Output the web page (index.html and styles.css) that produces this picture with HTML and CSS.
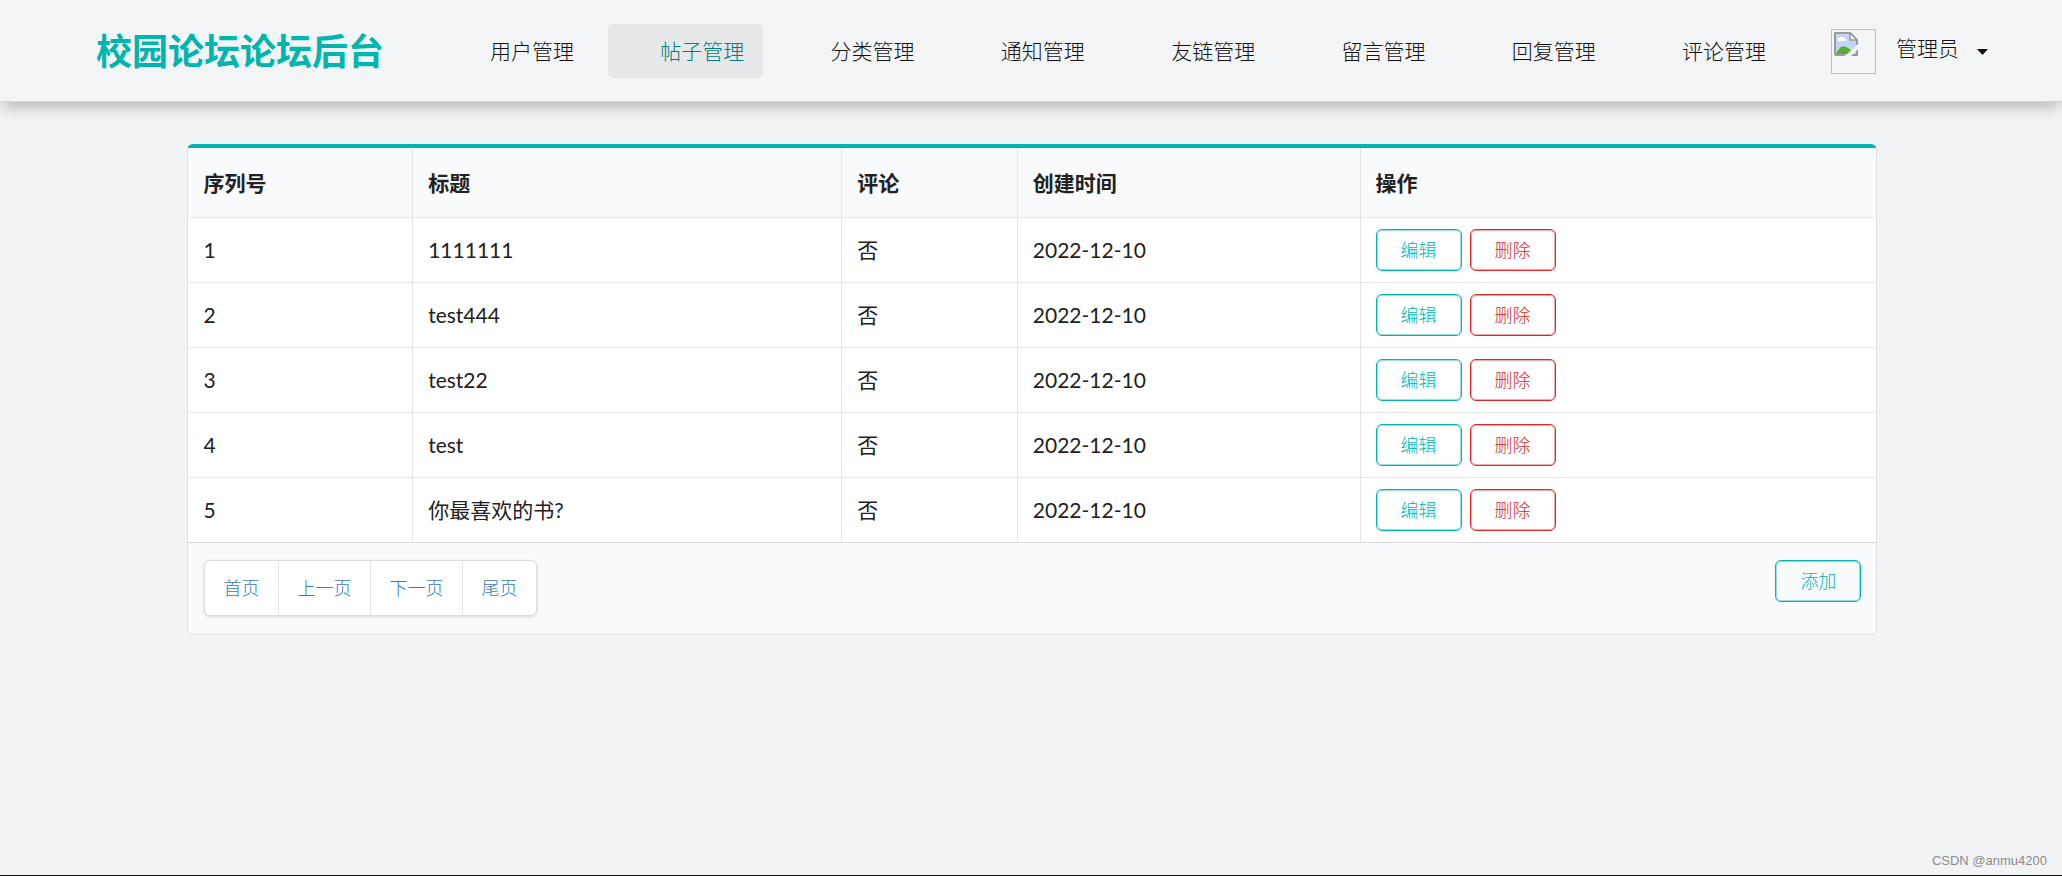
FILE: index.html
```html
<!DOCTYPE html>
<html lang="zh-CN">
<head>
<meta charset="utf-8">
<title>校园论坛论坛后台</title>
<link rel="stylesheet" href="styles.css">
</head>
<body>
<header class="topbar">
  <h1 class="brand">校园论坛论坛后台</h1>
  <nav class="menu">
    <a class="item" href="#">用户管理</a>
    <a class="item active" href="#" aria-current="page">帖子管理</a>
    <a class="item" href="#">分类管理</a>
    <a class="item" href="#">通知管理</a>
    <a class="item" href="#">友链管理</a>
    <a class="item" href="#">留言管理</a>
    <a class="item" href="#">回复管理</a>
    <a class="item" href="#">评论管理</a>
  </nav>
  <div class="account">
    <span class="avatar">
      <svg width="24" height="24" viewBox="0 0 24 24" aria-hidden="true">
        <path d="M1 1H16L23 8V23H1Z" fill="#c3d5f5"/>
        <path d="M2 22C5 15 9 13 12 15C15 16 18 19 19 22Z" fill="#5aac35"/>
        <path d="M4 9a2 2 0 0 1 1-3a3 3 0 0 1 5 0a2 2 0 0 1 2 3Z" fill="#fff"/>
        <path d="M1 23V1H16L23 8V13M1 23H11M17 23H23V18" fill="none" stroke="#9b9b9b" stroke-width="2"/>
        <path d="M16 1V8H23Z" fill="#fff" stroke="#9b9b9b" stroke-width="1.5"/>
        <path d="M11 24L24 12V17L17 24Z" fill="#f3f4f6"/>
      </svg>
    </span>
    <button class="user" type="button">管理员
      <svg class="caret" width="11" height="6" viewBox="0 0 11 6" aria-hidden="true"><path d="M0 0H11L5.5 6Z" fill="currentColor"/></svg>
    </button>
  </div>
</header>
<main class="content">
  <table class="posts">
    <thead>
      <tr><th class="c-no">序列号</th><th class="c-title">标题</th><th class="c-comment">评论</th><th class="c-date">创建时间</th><th>操作</th></tr>
    </thead>
    <tbody>
      <tr><td>1</td><td>1111111</td><td>否</td><td>2022-12-10</td><td><div class="actions"><button class="btn teal" type="button">编辑</button><button class="btn red" type="button">删除</button></div></td></tr>
      <tr><td>2</td><td>test444</td><td>否</td><td>2022-12-10</td><td><div class="actions"><button class="btn teal" type="button">编辑</button><button class="btn red" type="button">删除</button></div></td></tr>
      <tr><td>3</td><td>test22</td><td>否</td><td>2022-12-10</td><td><div class="actions"><button class="btn teal" type="button">编辑</button><button class="btn red" type="button">删除</button></div></td></tr>
      <tr><td>4</td><td>test</td><td>否</td><td>2022-12-10</td><td><div class="actions"><button class="btn teal" type="button">编辑</button><button class="btn red" type="button">删除</button></div></td></tr>
      <tr><td>5</td><td>你最喜欢的书?</td><td>否</td><td>2022-12-10</td><td><div class="actions"><button class="btn teal" type="button">编辑</button><button class="btn red" type="button">删除</button></div></td></tr>
    </tbody>
    <tfoot>
      <tr><td colspan="5">
        <div class="footer-row">
          <nav class="pager">
            <a href="#">首页</a><a href="#">上一页</a><a href="#">下一页</a><a href="#">尾页</a>
          </nav>
          <button class="btn teal" type="button">添加</button>
        </div>
      </td></tr>
    </tfoot>
  </table>
</main>
<div class="watermark">CSDN @anmu4200</div>
</body>
</html>
```
FILE: styles.css
```css
* {
  box-sizing: border-box;
}

body {
  margin: 0;
  min-height: 100vh;
  background: #f1f3f5;
  border-bottom: 1px solid #111;
  color: #212121;
  font-family: "Lato", "Noto Sans CJK SC", sans-serif;
  font-size: 21px;
  line-height: 30px;
}

a {
  color: inherit;
  text-decoration: none;
}

button {
  font: inherit;
  color: inherit;
  background: none;
  border: 0;
  padding: 0;
  cursor: pointer;
}

.topbar {
  display: flex;
  align-items: center;
  padding: 23px 74px 23px 96px;
  background: #f3f4f6;
  border-bottom: 1px solid #d4d5d7;
  box-shadow: 0 8px 14px -3px rgba(0, 0, 0, 0.25);
}

.brand {
  margin: 0 54px 0 0;
  padding-top: 1px;
  color: #00b5ad;
  font-size: 36px;
  line-height: 54px;
  font-weight: 700;
  white-space: nowrap;
}

.menu {
  flex: 1;
  display: flex;
  justify-content: space-between;
  margin-right: 46px;
}

.item {
  padding: 12px 19px 12px 52px;
  border-radius: 6px;
  color: #111;
  font-weight: 300;
  white-space: nowrap;
}

.item.active {
  background: #e6e7e9;
  color: #007c7c;
}

.account {
  display: flex;
  align-items: center;
  gap: 20px;
}

.avatar {
  display: flex;
  width: 45px;
  height: 45px;
  margin-top: 1px;
  padding: 2px;
  border: 1px solid #c0c0c0;
}

.user {
  display: flex;
  align-items: center;
  gap: 18px;
  margin-bottom: 6px;
  color: #111;
  font-weight: 300;
}

.caret {
  margin-top: 8px;
}

.content {
  width: 82%;
  margin-left: calc(9% + 1px);
  padding-top: 42px;
}

.posts {
  width: 100%;
  table-layout: fixed;
  border: 1px solid #dedfe0;
  border-top: 4px solid #00b5ad;
  border-radius: 6px;
  border-spacing: 0;
  background: #fff;
}

.posts th,
.posts td {
  padding: 11px 15px;
  border-left: 1px solid #e4e5e6;
  text-align: left;
}

.posts th:first-child,
.posts td:first-child {
  border-left: 0;
  padding-left: 16px;
}

.posts th {
  padding: 20px 15px 19px;
  background: #f9fafb;
  font-weight: 700;
}

.posts tbody td {
  border-top: 1px solid #e4e5e6;
}

.posts tfoot td {
  padding: 17px 15px 18px;
  background: #f9fafb;
  border-top: 1px solid #d8d9da;
  border-radius: 0 0 5px 5px;
}

.c-no {
  width: 13.3%;
}

.c-title {
  width: 25.4%;
}

.c-comment {
  width: 10.4%;
}

.c-date {
  width: 20.3%;
}

.actions {
  display: flex;
  gap: 8px;
}

.btn {
  padding: 5px 24px;
  border: 1px solid currentColor;
  border-radius: 6px;
  font-size: 18px;
  font-weight: 300;
}

.teal {
  color: #00b5ad;
  box-shadow: inset 0 0 0 1px rgba(0, 181, 173, 0.4);
}

.red {
  color: #db2828;
  box-shadow: inset 0 0 0 1px rgba(219, 40, 40, 0.4);
}

.footer-row {
  display: flex;
  justify-content: space-between;
  align-items: flex-start;
}

.pager {
  display: flex;
  background: #fff;
  border: 1px solid #dcddde;
  border-radius: 6px;
  box-shadow: 0 1px 3px rgba(34, 36, 38, 0.15);
  color: #357abd;
  font-size: 18px;
  font-weight: 300;
}

.pager a {
  padding: 12px 18px 12px 19px;
}

.pager a + a {
  border-left: 1px solid #e4e5e6;
}

.watermark {
  position: absolute;
  right: 15px;
  bottom: 5px;
  color: #8b8c8e;
  font-family: "Liberation Sans", Arial, sans-serif;
  font-size: 13px;
  line-height: 20px;
}
```
